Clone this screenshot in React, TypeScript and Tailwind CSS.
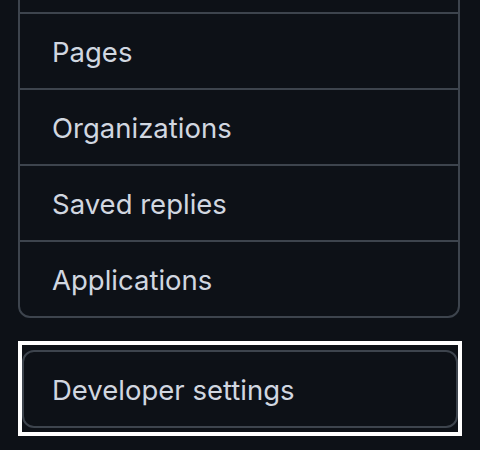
const items = ['', 'Pages', 'Organizations', 'Saved replies', 'Applications'];

export default function App() {
    return (
        <div
            className="h-[450px] w-[480px] overflow-hidden bg-[#0d1117] text-[#d1d7e0]"
            style={{ fontFamily: 'Inter, "Noto Sans", sans-serif' }}
        >
            {/* settings nav card, top cut off */}
            <div className="ml-[18px] -mt-[64px] w-[442px] rounded-[12px] border-2 border-[#3d444d]">
                {items.map((label, i) => (
                    <div
                        key={i}
                        className={`flex items-center pl-[32px] pt-[4px] text-[27.5px] ${i === 0 ? 'h-[74px]' : 'h-[76px] border-t-2 border-[#3d444d]'}`}
                    >
                        {label}
                    </div>
                ))}
            </div>

            {/* highlighted block */}
            <div className="ml-[18px] mt-[23px] w-[444px] border-4 border-white pt-[5px] pb-[4px]">
                <div className="flex h-[78px] items-center rounded-[12px] border-2 border-[#3d444d] pl-[28px] pt-[4px] text-[27.5px]">
                    Developer settings
                </div>
            </div>
        </div>
    );
}
